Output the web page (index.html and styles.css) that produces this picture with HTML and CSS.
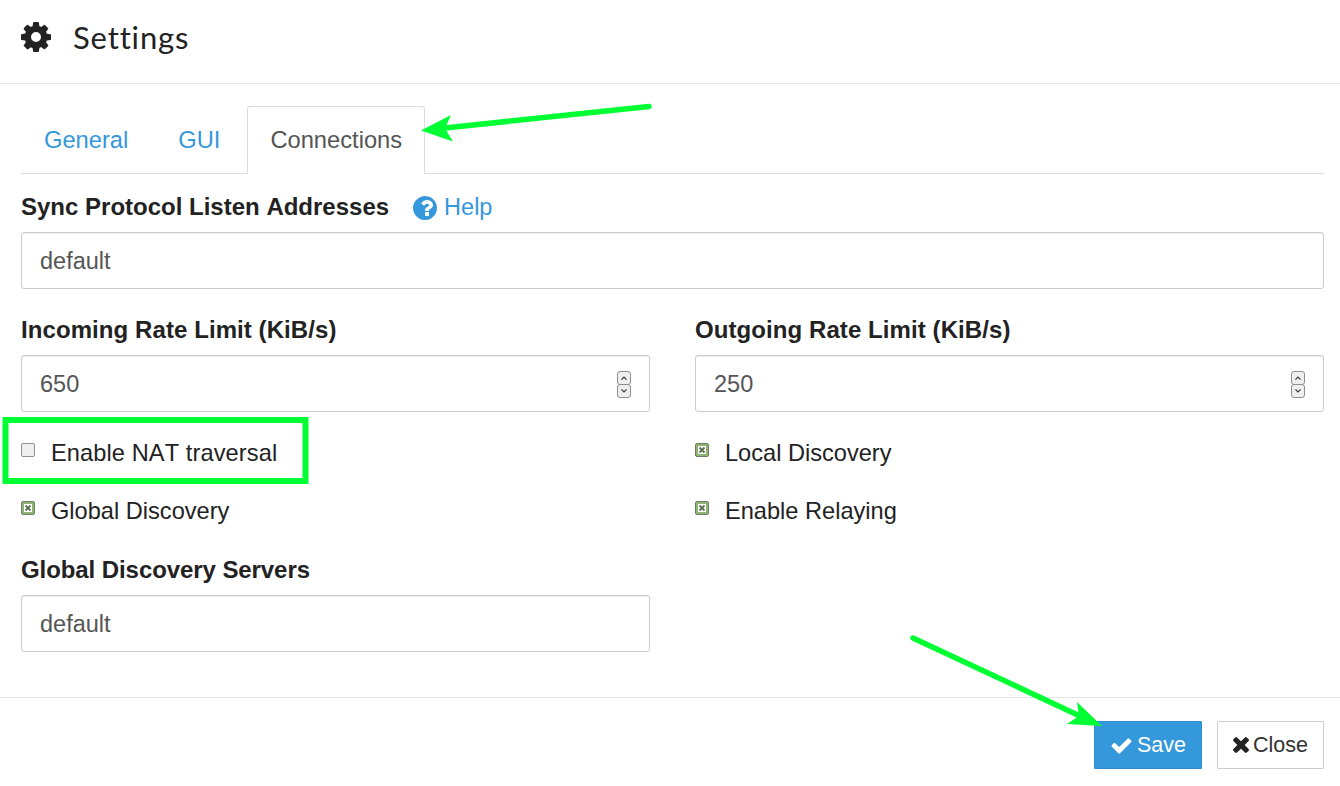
FILE: index.html
```html
<!DOCTYPE html>
<html lang="en">
<head>
<meta charset="utf-8">
<title>Settings</title>
<link rel="stylesheet" href="styles.css">
</head>
<body>
<div class="dialog">
  <header class="head">
    <svg class="gear" viewBox="0 0 1536 1536"><path fill="#222" d="M1024 768q0-106-75-181t-181-75-181 75-75 181 75 181 181 75 181-75 75-181zm512-109v222q0 12-8 23t-20 13l-185 28q-19 54-39 91 35 50 107 138 10 12 10 25t-9 23q-27 37-99 108t-94 71q-12 0-26-9l-138-108q-44 23-91 38-16 136-29 186-7 28-36 28H657q-14 0-24.500-8.500T621 1510l-28-184q-49-16-90-37l-141 107q-10 9-25 9-14 0-25-11-126-114-165-168-7-10-7-23 0-12 8-23 15-21 51-66.500t54-70.500q-27-50-41-99L29 917q-13-2-21-12.500T0 881V659q0-12 8-23t19-13l186-28q14-46 39-92-40-57-107-138-10-12-10-24 0-10 9-23 26-36 98.500-107.500T337 139q13 0 26 10l138 107q44-23 91-38 16-136 29-186 7-28 36-28h222q14 0 24.500 8.500T915 34l28 184q49 16 90 37l142-107q9-9 24-9 13 0 25 10 129 119 165 170 7 8 7 22 0 12-8 23-15 21-51 66.500t-54 70.500q26 50 41 98l183 28q13 2 21 12.500t8 23.500z"/></svg>
    <h1 class="title">Settings</h1>
  </header>
  <main class="body">
    <nav class="tabs">
      <a class="tab">General</a>
      <a class="tab">GUI</a>
      <a class="tab active">Connections</a>
    </nav>
    <div class="group">
      <div class="label-row">
        <label class="label">Sync Protocol Listen Addresses</label>
        <a class="help">
          <svg class="help-icon" viewBox="0 128 1536 1536"><path fill="#3498db" d="M1024 1376v-192q0-14-9-23t-23-9H800q-14 0-23 9t-9 23v192q0 14 9 23t23 9h192q14 0 23-9t9-23zm256-672q0-88-55.500-163T1086 425t-170-41q-243 0-371 213-15 24 8 42l132 100q7 6 19 6 16 0 25-12 53-68 86-92 34-24 86-24 48 0 85.500 26t37.500 59q0 38-20 61t-68 45q-63 28-115.500 86.500T768 1020v36q0 14 9 23t23 9h192q14 0 23-9t9-23q0-19 21.500-49.500T1100 957q32-18 49-28.500t46-35 44.500-48 28-60.500 12.500-81zm256 192q0 209-103 385.500T1153 1561t-385 103-385-103-280-279T0 896t103-385 280-279T768 128t385 103 280 279 103 386z"/></svg>
          Help
        </a>
      </div>
      <input class="input" type="text" value="default">
    </div>
    <div class="cols">
      <div class="col">
        <div class="group">
          <label class="label rate">Incoming Rate Limit (KiB/s)</label>
          <div class="input number"><span>650</span>
            <span class="spin"><svg viewBox="0 0 14 12"><path d="M4 8l3-3 3 3"/></svg><svg viewBox="0 0 14 12"><path d="M4 4l3 3 3-3"/></svg></span>
          </div>
        </div>
        <div class="check nat"><span class="box"></span>Enable NAT traversal</div>
        <div class="check"><span class="box on"><svg viewBox="0 0 8 8"><path d="M1.500 1.500l5 5m0-5l-5 5"/></svg></span>Global Discovery</div>
      </div>
      <div class="col">
        <div class="group">
          <label class="label rate">Outgoing Rate Limit (KiB/s)</label>
          <div class="input number"><span>250</span>
            <span class="spin"><svg viewBox="0 0 14 12"><path d="M4 8l3-3 3 3"/></svg><svg viewBox="0 0 14 12"><path d="M4 4l3 3 3-3"/></svg></span>
          </div>
        </div>
        <div class="check"><span class="box on"><svg viewBox="0 0 8 8"><path d="M1.500 1.500l5 5m0-5l-5 5"/></svg></span>Local Discovery</div>
        <div class="check"><span class="box on"><svg viewBox="0 0 8 8"><path d="M1.500 1.500l5 5m0-5l-5 5"/></svg></span>Enable Relaying</div>
      </div>
    </div>
    <div class="cols servers">
      <div class="col">
        <label class="label tight">Global Discovery Servers</label>
        <input class="input" type="text" value="default">
      </div>
      <div class="col"></div>
    </div>
  </main>
  <footer class="foot">
    <button class="btn primary"><svg class="btn-icon" viewBox="0 256 1792 1280"><path fill="#fff" d="M1671 566q0 40-28 68l-724 724-136 136q-28 28-68 28t-68-28l-136-136-362-362q-28-28-28-68t28-68l136-136q28-28 68-28t68 28l294 295 656-657q28-28 68-28t68 28l136 136q28 28 28 68z"/></svg>Save</button>
    <button class="btn"><svg class="btn-icon small" viewBox="110 258 1188 1188"><path fill="#222" d="M1298 1214q0 40-28 68l-136 136q-28 28-68 28t-68-28L704 1124l-294 294q-28 28-68 28t-68-28L138 1282q-28-28-28-68t28-68l294-294L138 558q-28-28-28-68t28-68l136-136q28-28 68-28t68 28l294 294 294-294q28-28 68-28t68 28l136 136q28 28 28 68t-28 68L976 852l294 294q28 28 28 68z"/></svg>Close</button>
  </footer>
</div>
<svg class="overlay" viewBox="0 0 1340 786">
  <path class="shaft" d="M440 128.500L649 106.500"/>
  <path class="head-mark" d="M421 130.500L451 115 445 128.500 453 141.500z"/>
  <path class="shaft" d="M913 638L1082 717"/>
  <path class="head-mark" d="M1102 726L1077 702 1079 716 1067 724z"/>
  <rect class="mark-box" x="5.500" y="420" width="300" height="61"/>
</svg>
</body>
</html>
```
FILE: styles.css
```css
* { box-sizing: border-box; }
html, body { margin: 0; padding: 0; }
body {
  width: 1340px;
  height: 786px;
  overflow: hidden;
  position: relative;
  background: #fff;
  color: #222;
  font-family: "Liberation Sans", Arial, sans-serif;
  font-size: 23.500px;
  line-height: 33px;
  font-kerning: none;
}
.head {
  height: 84px;
  border-bottom: 1px solid #e5e5e5;
  display: flex;
  align-items: flex-start;
  padding: 22px 21px 0;
}
.gear { width: 30px; height: 30px; margin-right: 22px; flex: none; }
.title {
  margin: -1px 0 0;
  font-family: Lato, "Open Sans", sans-serif;
  font-weight: 400;
  font-size: 31px;
  line-height: 32px;
  letter-spacing: .85px;
  font-kerning: normal;
}
.body { padding: 22px 16px 0 21px; }
.tabs {
  display: flex;
  height: 68px;
  border-bottom: 1px solid #ddd;
  color: #3498db;
}
.tab {
  padding: 17px 22px 0;
  border: 1px solid transparent;
  height: 68px;
  margin-right: 4px;
  font-size: 23.700px;
}
.active {
  color: #555;
  background: #fff;
  border-color: #ddd #ddd #fff;
  border-radius: 3px 3px 0 0;
}
.label-row { display: flex; align-items: flex-end; height: 58px; }
.group { display: flex; flex-direction: column; }
.label {
  font-weight: 700;
  font-size: 24px;
  display: block;
  height: 45px;
  padding-top: 3px;
  color: #222;
  line-height: 33px;
}
.rate { letter-spacing: .08px; }
.tight { letter-spacing: -.08px; }
.help {
  color: #3498db;
  display: flex;
  align-items: center;
  margin-left: 24px;
  height: 45px;
  padding-bottom: 4px;
  gap: 7px;
}
.help-icon { width: 24px; height: 24px; }
.input {
  display: block;
  width: 100%;
  height: 57px;
  padding: 2px 18px 0;
  border: 1px solid #ccc;
  border-radius: 3px;
  color: #555;
  font: inherit;
  background: #fff;
  box-shadow: inset 0 1px 1px rgba(0,0,0,.075);
}
.number { display: flex; align-items: center; justify-content: space-between; padding-right: 18px; }
.spin { display: flex; flex-direction: column; width: 14px; }
.spin svg {
  width: 14px; height: 14px;
  background: #efefef;
  border: 1px solid #8f8f8f;
  border-radius: 3px;
  display: block;
}
.spin svg + svg { margin-top: -1px; }
.spin path { fill: none; stroke: #333; stroke-width: 1.300; }
.cols { display: grid; grid-template-columns: 629px 629px; column-gap: 45px; margin-top: 21px; }
.check {
  display: flex;
  align-items: flex-start;
  height: 33px;
  margin-top: 25px;
  color: #222;
  font-size: 23.600px;
}
.nat { letter-spacing: .1px; }
.box {
  width: 14px;
  height: 14px;
  margin: 6px 16px 0 0;
  border: 1px solid #8f8f8f;
  border-radius: 2px;
  background: #efefef;
  flex: none;
  display: block;
}
.box.on { background: #8fb573; border-color: #6f7f65; padding: 2px; }
.box svg { display: block; width: 8px; height: 8px; background: #fff; }
.box path { stroke: #5a7050; stroke-width: 1.800; fill: none; }
.servers { margin-top: 22px; }
.foot {
  margin-top: 45px;
  border-top: 1px solid #e5e5e5;
  padding: 23px 16px 0 0;
  display: flex;
  justify-content: flex-end;
  gap: 15px;
}
.btn {
  height: 48px;
  padding: 0 15px;
  font-family: "Liberation Sans", Arial, sans-serif;
  font-size: 21.500px;
  color: #333;
  background: #fff;
  border: 1px solid #ccc;
  border-radius: 1px;
  display: flex;
  align-items: center;
}
.primary { background: #3498db; border-color: #2e8ece; color: #fff; }
.btn-icon { width: 23px; height: 17px; margin-right: 4px; }
.btn-icon.small { width: 16px; height: 16px; margin-right: 4px; }
.overlay { position: absolute; left: 0; top: 0; width: 1340px; height: 786px; pointer-events: none; }
.shaft { fill: none; stroke: #00ff33; stroke-width: 5.500; stroke-linecap: round; }
.head-mark { fill: #00ff33; }
.mark-box { fill: none; stroke: #00ff33; stroke-width: 6; }
```
